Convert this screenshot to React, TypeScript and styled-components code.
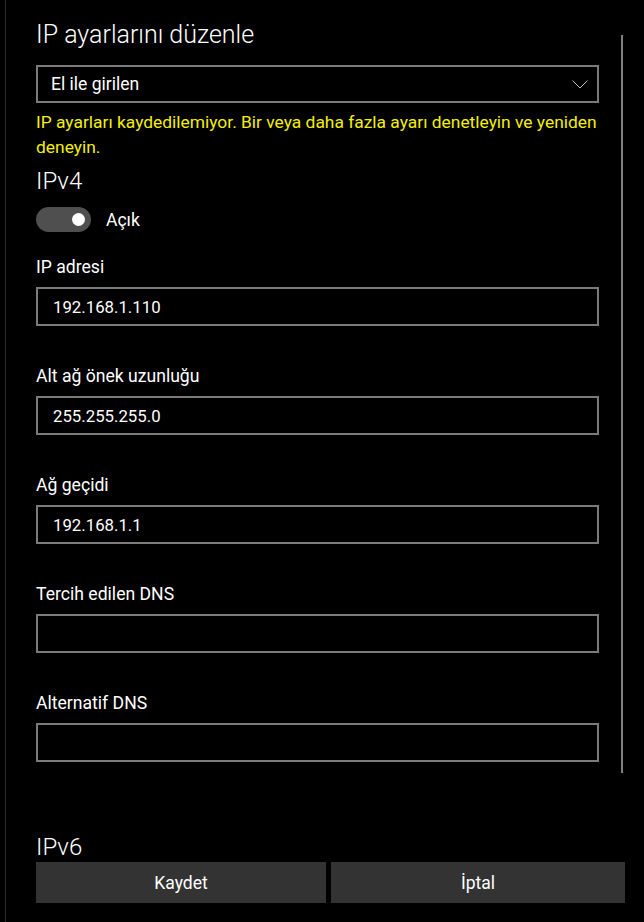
import React from "react";
import styled, { createGlobalStyle } from "styled-components";

const Global = createGlobalStyle`
  html, body { margin: 0; padding: 0; background: #000; }
  body { font-family: Roboto, "Noto Sans", "Liberation Sans", sans-serif; color: #fff; }
  * { box-sizing: border-box; }
`;

const Page = styled.div`
  position: relative;
  min-height: 922px;
  margin-left: 5px;
  border-left: 1px solid #2a2a2a;
  padding-left: 30px;
  padding-top: 19px;
`;

const Column = styled.div`
  width: 563px;
  display: flex;
  flex-direction: column;
`;

const Heading = styled.h2<{ $mt?: number; $lh?: number; $size?: number }>`
  margin: ${(p) => p.$mt ?? 0}px 0 0;
  font-size: ${(p) => p.$size ?? 24}px;
  font-weight: 300;
  line-height: ${(p) => p.$lh ?? 32}px;
  color: #fff;
`;

const Select = styled.div`
  margin-top: 14px;
  height: 38px;
  border: 2px solid #7a7a7a;
  display: flex;
  align-items: center;
  justify-content: space-between;
  padding: 0 9px 0 13px;
  font-size: 17.5px;
`;

const ErrorText = styled.p`
  margin: 7px -24px 0 0;
  font-size: 17.4px;
  line-height: 25px;
  color: #f4f000;
`;

const ToggleRow = styled.div`
  margin-top: 10px;
  display: flex;
  align-items: center;
  gap: 15px;
  font-size: 17.5px;
  height: 25px;
`;

const Track = styled.div`
  width: 55px;
  height: 25px;
  border-radius: 13px;
  background: #4f4f4f;
  display: flex;
  align-items: center;
  justify-content: flex-end;
  padding-right: 6px;
`;

const Knob = styled.div`
  width: 13px;
  height: 13px;
  border-radius: 50%;
  background: #fff;
`;

const Field = styled.div<{ $mt: number }>`
  margin-top: ${(p) => p.$mt}px;
  display: flex;
  flex-direction: column;
  gap: 9px;
`;

const Label = styled.div`
  font-size: 17.6px;
  line-height: 22px;
`;

const Input = styled.div`
  height: 39px;
  border: 2px solid #7a7a7a;
  display: flex;
  align-items: center;
  padding-left: 15px;
  font-size: 16.8px;
`;

const Buttons = styled.div`
  margin-top: 1px;
  width: 589px;
  display: grid;
  grid-template-columns: 290px 294px;
  gap: 5px;
`;

const Button = styled.button`
  height: 41px;
  border: none;
  background: #333333;
  color: #fff;
  font-family: inherit;
  font-size: 17.5px;
  padding: 0;
`;

const ScrollThumb = styled.div`
  position: absolute;
  left: 615px;
  top: 35px;
  width: 2px;
  height: 738px;
  background: #808080;
`;

const Chevron = () => (
  <svg width="16" height="9" viewBox="0 0 16 9" fill="none">
    <path d="M0.5 0.5 L8 8 L15.5 0.5" stroke="#bdbdbd" strokeWidth="1" />
  </svg>
);

const fields = [
  { label: "IP adresi", value: "192.168.1.110" },
  { label: "Alt ağ önek uzunluğu", value: "255.255.255.0" },
  { label: "Ağ geçidi", value: "192.168.1.1" },
  { label: "Tercih edilen DNS", value: "" },
  { label: "Alternatif DNS", value: "" },
];

export default function App() {
  return (
    <>
      <Global />
      <Page>
        <Column>
          <Heading $size={25}>IP ayarlarını düzenle</Heading>
          <Select>
            <span>El ile girilen</span>
            <Chevron />
          </Select>
          <ErrorText>
            IP ayarları kaydedilemiyor. Bir veya daha fazla ayarı denetleyin ve yeniden deneyin.
          </ErrorText>
          <Heading $mt={5}>IPv4</Heading>
          <ToggleRow>
            <Track>
              <Knob />
            </Track>
            <span>Açık</span>
          </ToggleRow>
          {fields.map((f, i) => (
            <Field key={f.label} $mt={i === 0 ? 24 : 39}>
              <Label>{f.label}</Label>
              <Input>{f.value}</Input>
            </Field>
          ))}
          <Heading $mt={71} $lh={28}>IPv6</Heading>
        </Column>
        <Buttons>
          <Button>Kaydet</Button>
          <Button>İptal</Button>
        </Buttons>
        <ScrollThumb />
      </Page>
    </>
  );
}
